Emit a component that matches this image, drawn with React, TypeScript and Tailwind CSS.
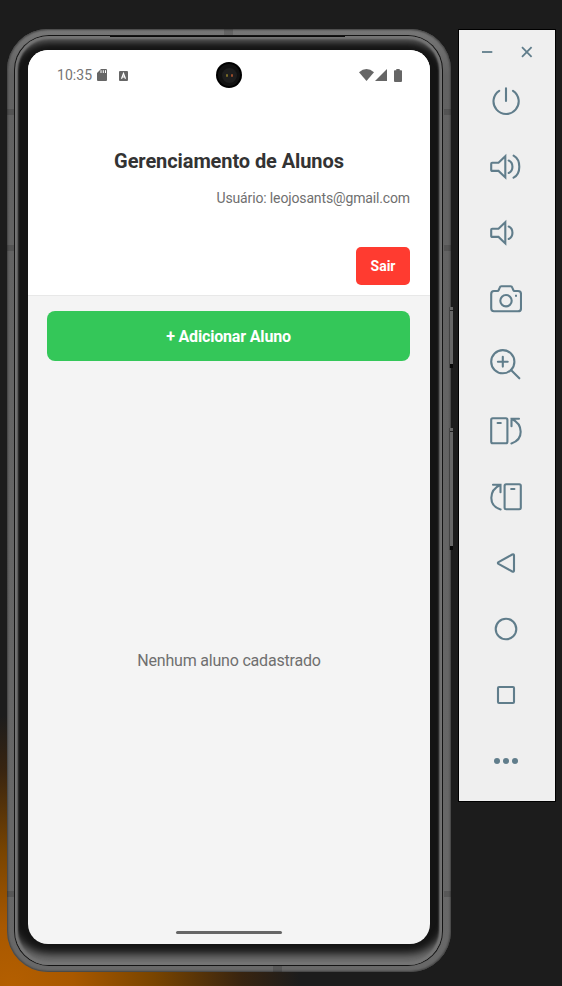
import type { ReactNode } from "react";

function Icon({ children }: { children: ReactNode }) {
  return (
    <button className="flex h-[66px] w-full items-center justify-center pr-0.5">
      <svg
        className="size-8 text-[#607d8b]"
        viewBox="0 0 32 32"
        fill="none"
        stroke="currentColor"
        strokeWidth="2.1"
        strokeLinejoin="round"
        strokeLinecap="round"
      >
        {children}
      </svg>
    </button>
  );
}

const speaker = <path d="M2.2 11.7H8.5L15.3 5.2V26.4L8.5 19.9H2.2Q1.2 19.9 1.2 18.9V12.7Q1.2 11.7 2.2 11.7Z" strokeLinejoin="miter" />;

const rotate = (
  <>
    <rect x="1.2" y="3.3" width="16.2" height="25" rx="1.5" />
    <path d="M7.6 8H10.8" />
    <path d="M29 3.8H21.5V11.2M21.5 3.8C33.5 9.5 34 24.5 21.4 28.4" strokeLinejoin="miter" />
  </>
);

function Toolbar() {
  return (
    <aside className="mt-[29px] ml-[7px] h-[773px] w-[98px] shrink-0 border border-black bg-[#efefef]">
      <div className="flex h-[38px] items-start justify-between px-[22px] pt-4 text-[#607d8b]">
        <svg className="h-3 w-3" viewBox="0 0 12 12" stroke="currentColor" strokeWidth="1.8">
          <path d="M1 6H11.3" />
        </svg>
        <svg className="h-3 w-3" viewBox="0 0 12 12" stroke="currentColor" strokeWidth="1.8">
          <path d="M1 1.2L10.6 10.8M10.6 1.2L1 10.8" />
        </svg>
      </div>
      <Icon>
        <path d="M9.2 5.8A12.6 12.6 0 1 0 23 5.8M16 3.2V16" />
      </Icon>
      <Icon>
        {speaker}
        <path d="M18.7 9.5C23.7 11.7 23.7 19.8 18.7 22M23.6 4.7C31.2 9 31.2 22.6 23.6 26.7" />
      </Icon>
      <Icon>
        {speaker}
        <path d="M18.7 9.5C23.7 11.7 23.7 19.8 18.7 22" />
      </Icon>
      <Icon>
        <path d="M4 8H7.3Q8.4 8 8.8 6.8L9.7 4.6Q10.1 3.3 11.4 3.3H20.6Q21.9 3.3 22.3 4.6L23.2 6.8Q23.6 8 24.7 8H28Q31 8 31 11V25.3Q31 28.3 28 28.3H4Q1.2 28.3 1.2 25.3V11Q1.2 8 4 8Z" />
        <circle cx="16" cy="17.7" r="5.7" />
        <path d="M25 12.7H27" strokeLinecap="butt" />
      </Icon>
      <Icon>
        <circle cx="12.8" cy="12.7" r="11.6" />
        <path d="M7.9 12.7H17.7M12.8 7.8V17.6M21 20.9L29.3 29.3" />
      </Icon>
      <Icon>{rotate}</Icon>
      <Icon>
        <g transform="matrix(-1 0 0 1 32 0)">{rotate}</g>
      </Icon>
      <Icon>
        <path d="M8.5 15.1L22.3 7.5Q24 6.9 24 8.5V23.5Q24 25.1 22.3 24.5L8.5 16.9Q7.2 16 8.5 15.1Z" />
      </Icon>
      <Icon>
        <circle cx="16" cy="16" r="10.3" />
      </Icon>
      <Icon>
        <rect x="8" y="8" width="16" height="16" rx="1" />
      </Icon>
      <Icon>
        <g fill="currentColor" stroke="none">
          <circle cx="7" cy="16" r="3" />
          <circle cx="16" cy="16" r="3" />
          <circle cx="25" cy="16" r="3" />
        </g>
      </Icon>
    </aside>
  );
}

function StatusBar() {
  return (
    <div className="flex h-[50px] items-center pr-7 pl-[29px] text-[#666]">
      <span className="w-[35px] text-[14px] tracking-[0.05px] text-[#757575]">10:35</span>
      <svg className="ml-[5px] h-3 w-[10px]" viewBox="0 0 10 12">
        <path d="M4 0H9Q10 0 10 1V11Q10 12 9 12H1Q0 12 0 11V4Z" fill="currentColor" />
        <path d="M4 1.2V4M6.3 1.2V4M8.5 1.2V4" stroke="#fff" strokeWidth="1" />
      </svg>
      <svg className="mt-px ml-3 h-[10px] w-[9px]" viewBox="0 0 9 10">
        <rect width="9" height="10" rx="1" fill="currentColor" />
        <path d="M2.5 7.7L4.5 2.5L6.5 7.7M3.3 6H5.7" stroke="#fff" strokeWidth="1.2" fill="none" />
      </svg>
      <div className="ml-[88px] flex size-[26px] items-center justify-center rounded-full bg-black">
        <div className="flex size-[22px] items-center justify-center rounded-full bg-[#111]">
          <div className="flex size-[15px] items-center justify-center gap-[3px] rounded-full bg-[#1e1e1e]">
            <i className="h-[3px] w-0.5 rounded-full bg-[#7b6c26]" />
            <i className="h-[3px] w-0.5 rounded-full bg-[#9a4c2c]" />
          </div>
        </div>
      </div>
      <svg className="ml-auto h-3 w-[15px]" viewBox="0 0 15 12">
        <path d="M0 3.3Q7.5-3.2 15 3.3L7.5 12Z" fill="currentColor" />
      </svg>
      <svg className="ml-px h-3 w-3" viewBox="0 0 12 12">
        <path d="M12 0V12H0Z" fill="currentColor" />
      </svg>
      <svg className="ml-[7px] h-[13px] w-2" viewBox="0 0 8 13">
        <path d="M2.3 0H5.7V1.2H7.2Q8 1.2 8 2V12Q8 13 7 13H1Q0 13 0 12V2Q0 1.2.8 1.2H2.3Z" fill="currentColor" />
      </svg>
    </div>
  );
}

function Screen() {
  return (
    <main className="flex h-[894px] w-[402px] flex-col overflow-hidden rounded-[20px] bg-[#f4f4f4]">
      <header className="h-[246px] border-b border-[#e8e8e8] bg-white">
        <StatusBar />
        <div className="flex flex-col px-5 pt-[47px]">
          <h1 className="text-center text-[20px] leading-7 font-bold tracking-[-0.09px] text-[#333]">Gerenciamento de Alunos</h1>
          <p className="mt-[13px] text-right text-[14px] leading-5 tracking-[-0.14px] text-[#6f6f6f]">Usuário: leojosants@gmail.com</p>
          <button className="mt-[39px] h-[38px] w-[54px] self-end rounded-[5px] bg-[#ff3b30] pt-px text-[14px] font-bold text-white">
            Sair
          </button>
        </div>
      </header>
      <button className="mt-[15px] ml-[19px] h-[50px] w-[363px] shrink-0 rounded-[8px] bg-[#34c759] pt-px text-[16px] font-bold tracking-[-0.17px] text-white">
        + Adicionar Aluno
      </button>
      <div className="flex flex-1 flex-col items-center justify-end pb-[10px]">
        <p className="mb-[258px] text-[16px] leading-6 tracking-[-0.2px] text-[#6f6f6f]">Nenhum aluno cadastrado</p>
        <div className="h-[3.5px] w-[106px] rounded-full bg-[#666]" />
      </div>
    </main>
  );
}

function Notch({ className }: { className: string }) {
  return <i className={`absolute bg-black/15 ${className}`} />;
}

function SideKey({ className }: { className: string }) {
  return (
    <div className={`absolute left-[442px] w-1 border-l border-[#444] bg-[#686868] ${className}`}>
      <div className="mt-[3px] h-px bg-[#222]" />
      <div className="absolute bottom-0 h-1 w-full bg-[#080808]" />
    </div>
  );
}

function Phone() {
  return (
    <section className="relative mt-[29px] ml-[7px] h-[943px] w-[444px] shrink-0">
      <div className="h-full rounded-[41px] bg-linear-to-b from-[#777] via-[#626262] via-5% to-[#686868] pt-[6px] pr-2 pb-[6px] pl-[7px] shadow-[inset_0_0_2px_1px_#414141]">
        <div className="h-full rounded-[35px] bg-[#141414] p-px">
          <div className="h-full rounded-[34px] bg-[#141414] pt-[14px] pl-[13px] shadow-[inset_0_0_2px_3px_#747474,inset_0_-17px_9px_-6px_#707070,inset_0_11px_7px_-5px_#606060]">
            <Screen />
          </div>
        </div>
      </div>
      <Notch className="top-[80px] left-0 h-1.5 w-[7px]" />
      <Notch className="top-[216px] left-0 h-1.5 w-[7px]" />
      <Notch className="top-[862px] left-0 h-1.5 w-[7px]" />
      <Notch className="top-[80px] right-0 h-1.5 w-[7px]" />
      <Notch className="top-[216px] right-0 h-1.5 w-[7px]" />
      <Notch className="top-[862px] right-0 h-1.5 w-[7px]" />
      <Notch className="top-0 left-[217px] h-1.5 w-[9px]" />
      <Notch className="bottom-0 left-[266px] h-1.5 w-[9px]" />
      <i className="absolute top-[7px] left-[103px] h-px w-[235px] bg-[#0a0a0a]" />
      <SideKey className="top-[278px] h-[61px]" />
      <SideKey className="top-[399px] h-[122px]" />
    </section>
  );
}

export default function App() {
  return (
    <div className="flex h-[986px] w-[562px] items-start overflow-hidden bg-[#1c1c1c] bg-[radial-gradient(ellipse_290px_270px_at_10px_100%,#b45f00_0%,#a85800_22%,#784400_50%,#382410_80%,#1c1c1c_100%)] font-['Roboto',sans-serif]">
      <Phone />
      <Toolbar />
    </div>
  );
}
